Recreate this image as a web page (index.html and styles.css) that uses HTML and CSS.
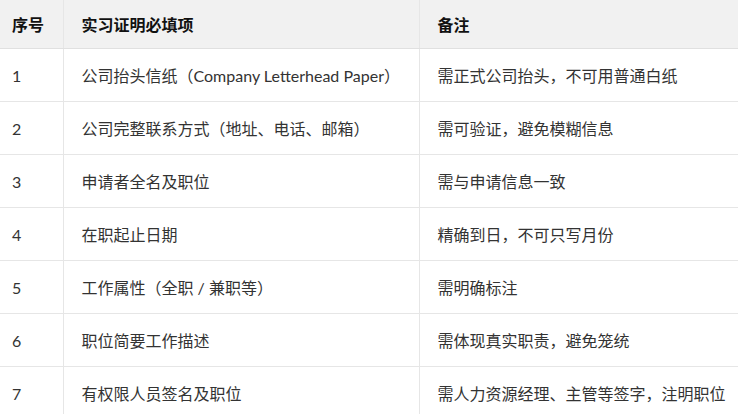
FILE: index.html
```html
<!DOCTYPE html>
<html lang="zh-CN">
<head>
<meta charset="utf-8">
<title>实习证明必填项</title>
<link rel="stylesheet" href="styles.css">
</head>
<body>
<table class="req-table">
  <colgroup>
    <col class="c-no">
    <col class="c-item">
    <col class="c-note">
  </colgroup>
  <thead>
    <tr><th>序号</th><th>实习证明必填项</th><th>备注</th></tr>
  </thead>
  <tbody>
    <tr><td>1</td><td>公司抬头信纸（Company Letterhead Paper）</td><td>需正式公司抬头，不可用普通白纸</td></tr>
    <tr><td>2</td><td>公司完整联系方式（地址、电话、邮箱）</td><td>需可验证，避免模糊信息</td></tr>
    <tr><td>3</td><td>申请者全名及职位</td><td>需与申请信息一致</td></tr>
    <tr><td>4</td><td>在职起止日期</td><td>精确到日，不可只写月份</td></tr>
    <tr><td>5</td><td>工作属性（全职 / 兼职等）</td><td>需明确标注</td></tr>
    <tr><td>6</td><td>职位简要工作描述</td><td>需体现真实职责，避免笼统</td></tr>
    <tr><td>7</td><td>有权限人员签名及职位</td><td>需人力资源经理、主管等签字，注明职位</td></tr>
  </tbody>
</table>
</body>
</html>
```
FILE: styles.css
```css
html, body {
  margin: 0;
  padding: 0;
  background: #ffffff;
}
body {
  font-family: "Lato", "Noto Sans CJK SC", sans-serif;
  font-size: 16px;
  color: #333333;
  overflow: hidden;
}
.req-table {
  width: 738px;
  border-collapse: collapse;
  table-layout: fixed;
}
.c-no { width: 63px; }
.c-item { width: 356px; }
.c-note { width: 319px; }
.req-table th,
.req-table td {
  text-align: left;
  vertical-align: middle;
  padding: 0 18px;
  border-bottom: 1px solid #e6e6e6;
  border-right: 1px solid #e6e6e6;
  white-space: nowrap;
}
.req-table th:first-child,
.req-table td:first-child {
  padding-left: 12px;
}
.req-table th:last-child,
.req-table td:last-child {
  border-right: none;
}
.req-table th {
  height: 48px;
  background: #f1f1f1;
  font-weight: 700;
  color: #111111;
  border-bottom-color: #e0e0e0;
}
.req-table td {
  height: 52px;
}
```
